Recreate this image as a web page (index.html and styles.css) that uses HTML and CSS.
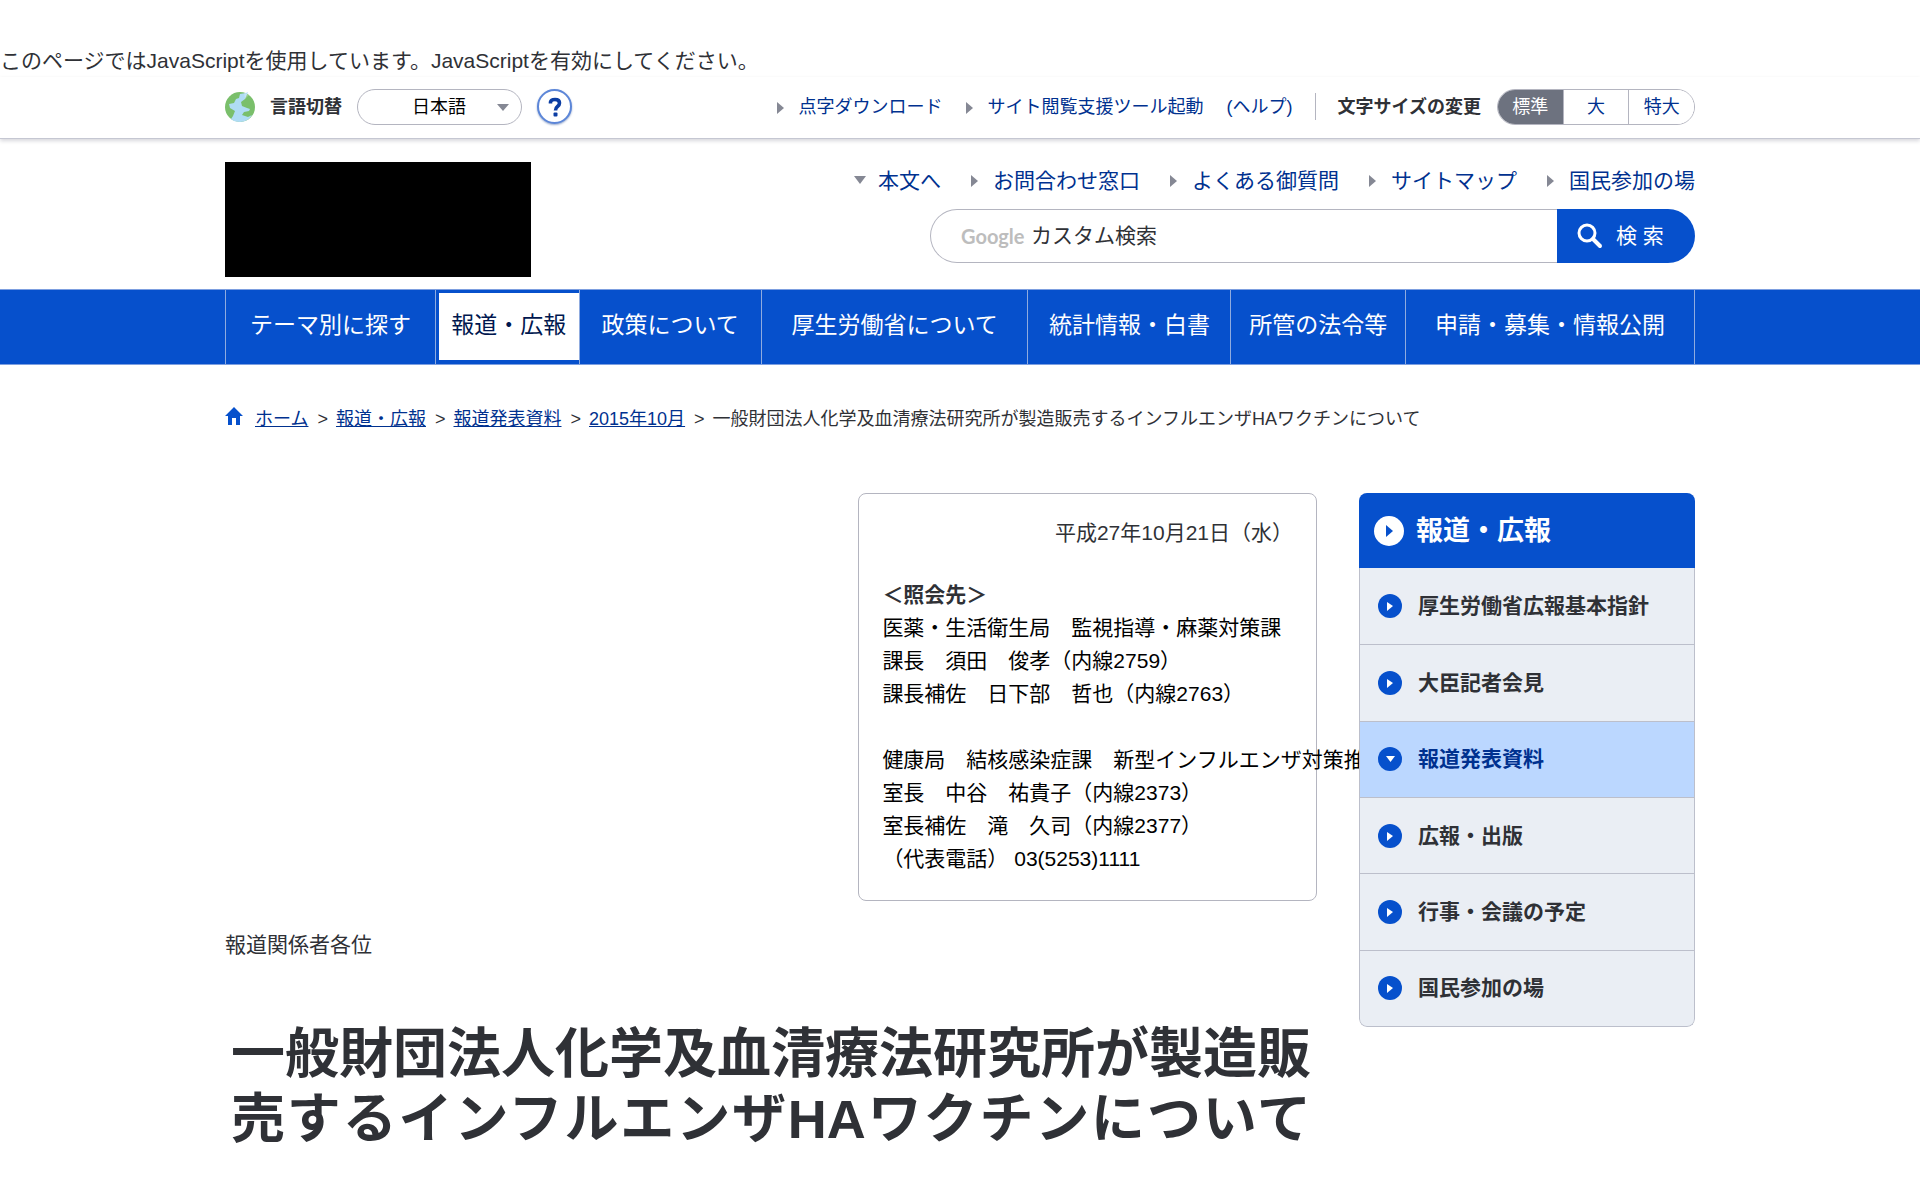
FILE: index.html
```html
<!DOCTYPE html>
<html lang="ja">
<head>
<meta charset="utf-8">
<meta name="viewport" content="width=device-width, initial-scale=1">
<title>一般財団法人化学及血清療法研究所が製造販売するインフルエンザHAワクチンについて</title>
<link rel="stylesheet" href="styles.css">
</head>
<body>
<p class="script-notice">このページではJavaScriptを使用しています。JavaScriptを有効にしてください。</p>

<div class="topbar">
  <div class="container topbar-inner">
    <div class="language">
      <svg class="globe" viewBox="0 0 30 30" aria-hidden="true">
        <circle cx="15" cy="15" r="15" fill="#7abf6b"/>
        <path d="M11 7 14 6 15 2 21 1 23 0 20 7 16 10 17 14 22 16 25 17 24 19 19 20 17 23 23 25 27 23 Q23 30 15 30 Q9 30 6 27 L8 24 10 19 5 16 4 12 9 11Z" fill="#afdcf5"/>
        <path d="M19 0 22 2 24 3 20 7Z" fill="#fff" opacity=".25"/>
      </svg>
      <label class="language-label" for="language">言語切替</label>
      <span class="select-wrap"><select id="language" class="language-select"><option>日本語</option><option>English</option></select></span>
      <button class="help" type="button" aria-label="言語切替のヘルプ">
        <svg viewBox="0 0 18 20" width="18" height="20" aria-hidden="true"><path d="M4.500 6.500V5Q5 2.500 9 2.500Q13.500 2.500 13.500 6Q13.500 8 11.500 9.500Q9.500 11 9.500 13.500" fill="none" stroke="#0b3da3" stroke-width="3.600"/><rect x="7.500" y="15.500" width="4" height="4" rx="1" fill="#0b3da3"/></svg>
      </button>
    </div>
    <div class="tools">
      <a class="arrow" href="#">点字ダウンロード</a>
      <a class="arrow" href="#">サイト閲覧支援ツール起動</a>
      <a class="tool-help" href="#">(ヘルプ)</a>
      <div class="text-size">
        <span class="text-size-label">文字サイズの変更</span>
        <div class="size-buttons">
          <button class="size is-current" type="button">標準</button>
          <button class="size" type="button">大</button>
          <button class="size" type="button">特大</button>
        </div>
      </div>
    </div>
  </div>
</div>

<header class="container header">
  <div class="logo"></div>
  <div class="header-side">
    <nav class="header-links">
      <a class="arrow arrow-down" href="#content">本文へ</a>
      <a class="arrow" href="#">お問合わせ窓口</a>
      <a class="arrow" href="#">よくある御質問</a>
      <a class="arrow" href="#">サイトマップ</a>
      <a class="arrow" href="#">国民参加の場</a>
    </nav>
    <form class="search">
      <label class="search-field"><span class="google">Google</span><input class="search-input" type="text" placeholder="カスタム検索"></label>
      <button class="search-button" type="button">
        <svg viewBox="0 0 26 26" width="26" height="26" aria-hidden="true"><circle cx="10" cy="10" r="8" fill="none" stroke="#fff" stroke-width="3"/><path d="M16 16 23 23" stroke="#fff" stroke-width="4" stroke-linecap="round"/></svg>
        検 索
      </button>
    </form>
  </div>
</header>

<nav class="global-nav">
  <ul class="container global-list">
    <li><a href="#">テーマ別に探す</a></li>
    <li class="is-active"><a href="#">報道・広報</a></li>
    <li><a href="#">政策について</a></li>
    <li><a href="#">厚生労働省について</a></li>
    <li><a href="#">統計情報・白書</a></li>
    <li><a href="#">所管の法令等</a></li>
    <li><a href="#">申請・募集・情報公開</a></li>
  </ul>
</nav>

<div class="container breadcrumb">
  <svg class="home" viewBox="0 0 18 18" aria-hidden="true"><path d="M9 0 18 9H15V18H11V11H7V18H3V9H0Z" fill="#0650cc"/></svg>
  <a href="#">ホーム</a><span>&gt;</span>
  <a href="#">報道・広報</a><span>&gt;</span>
  <a href="#">報道発表資料</a><span>&gt;</span>
  <a href="#">2015年10月</a><span>&gt;</span>
  <span>一般財団法人化学及血清療法研究所が製造販売するインフルエンザHAワクチンについて</span>
</div>

<div class="container columns">
  <main class="content" id="content">
    <section class="contact">
      <p class="contact-date">平成27年10月21日（水）</p>
      <h2 class="contact-title">＜照会先＞</h2>
      <p class="contact-group">医薬・生活衛生局　監視指導・麻薬対策課<br>課長　須田　俊孝（内線2759）<br>課長補佐　日下部　哲也（内線2763）</p>
      <p class="contact-group">健康局　結核感染症課　新型インフルエンザ対策推進室<br>室長　中谷　祐貴子（内線2373）<br>室長補佐　滝　久司（内線2377）<br>（代表電話） 03(5253)1111</p>
    </section>
    <p class="addressee">報道関係者各位</p>
    <h1 class="title">一般財団法人化学及血清療法研究所が製造販売するインフルエンザHAワクチンについて</h1>
  </main>
  <aside class="side">
    <h2 class="side-title"><a href="#"><svg viewBox="0 0 30 30" width="30" height="30" aria-hidden="true"><circle cx="15" cy="15" r="15" fill="#fff"/><path d="M12 9 19 15 12 21Z" fill="#0650cc"/></svg>報道・広報</a></h2>
    <ul class="side-list">
      <li><a href="#"><svg viewBox="0 0 24 24" width="24" height="24" aria-hidden="true"><circle cx="12" cy="12" r="12" fill="#0650cc"/><path d="M9 8 15 12 9 17Z" fill="#fff"/></svg>厚生労働省広報基本指針</a></li>
      <li><a href="#"><svg viewBox="0 0 24 24" width="24" height="24" aria-hidden="true"><circle cx="12" cy="12" r="12" fill="#0650cc"/><path d="M9 8 15 12 9 17Z" fill="#fff"/></svg>大臣記者会見</a></li>
      <li class="is-active"><a href="#"><svg viewBox="0 0 24 24" width="24" height="24" aria-hidden="true"><circle cx="12" cy="12" r="12" fill="#0650cc"/><path d="M8 9H17L12.500 15Z" fill="#fff"/></svg>報道発表資料</a></li>
      <li><a href="#"><svg viewBox="0 0 24 24" width="24" height="24" aria-hidden="true"><circle cx="12" cy="12" r="12" fill="#0650cc"/><path d="M9 8 15 12 9 17Z" fill="#fff"/></svg>広報・出版</a></li>
      <li><a href="#"><svg viewBox="0 0 24 24" width="24" height="24" aria-hidden="true"><circle cx="12" cy="12" r="12" fill="#0650cc"/><path d="M9 8 15 12 9 17Z" fill="#fff"/></svg>行事・会議の予定</a></li>
      <li><a href="#"><svg viewBox="0 0 24 24" width="24" height="24" aria-hidden="true"><circle cx="12" cy="12" r="12" fill="#0650cc"/><path d="M9 8 15 12 9 17Z" fill="#fff"/></svg>国民参加の場</a></li>
    </ul>
  </aside>
</div>
</body>
</html>
```

FILE: styles.css
```css
* { box-sizing: border-box; }

body {
  margin: 0;
  background: #fff;
  color: #2f3136;
  font-family: "Liberation Sans", "Noto Sans CJK JP", sans-serif;
  font-size: 21px;
  line-height: 32px;
}

h1, h2, p, ul { margin: 0; padding: 0; }
ul { list-style: none; }
a { color: #00318f; text-decoration: none; }
button, input, select { font: inherit; color: inherit; }
svg { flex: none; }

.container {
  width: 100%;
  max-width: 1470px;
  margin: 0 auto;
}

.script-notice { padding-top: 45px; }

/* top bar */
.topbar {
  border-bottom: 1px solid #c5c7d2;
  box-shadow: 0 2px 4px rgba(0, 0, 40, .16);
  font-size: 18px;
}
.topbar-inner {
  display: flex;
  justify-content: space-between;
  align-items: center;
  height: 61px;
  padding-bottom: 2px;
}
.language, .tools, .text-size, .size-buttons { display: flex; align-items: center; }
.globe { width: 30px; height: 30px; }
.language-label { margin: 0 15px; font-weight: bold; }
.select-wrap { position: relative; display: flex; }
.select-wrap::after {
  content: "";
  position: absolute;
  right: 13px;
  top: 15px;
  border: 6px solid transparent;
  border-top: 7px solid #858894;
  border-bottom: 0;
  pointer-events: none;
}
.language-select {
  width: 165px;
  height: 36px;
  padding: 0 0 0 54px;
  appearance: none;
  border: 1px solid #b4b5c0;
  border-radius: 18px;
  background: #fff;
  color: #000;
}
.help {
  display: flex;
  align-items: center;
  justify-content: center;
  width: 35px;
  height: 35px;
  margin-left: 15px;
  padding: 0;
  border: 2px solid #5c86d8;
  border-radius: 50%;
  background: #fff;
  box-shadow: 0 1px 2px #9aaccf;
}
.arrow::before {
  content: "";
  display: inline-block;
  margin-right: 15px;
  border: 6px solid transparent;
  border-left: 7px solid #858894;
  border-right: 0;
  vertical-align: -1px;
}
.tools .arrow { margin-right: 23px; }
.text-size {
  margin-left: 22px;
}
.text-size::before {
  content: "";
  width: 1px;
  height: 27px;
  margin-right: 22px;
  background: #b4b5c0;
}
.text-size-label { margin-right: 16px; font-weight: bold; }
.size-buttons {
  width: 198px;
  height: 36px;
  border: 1px solid #b4b5c0;
  border-radius: 18px;
  overflow: hidden;
}
.size {
  flex: 1;
  height: 34px;
  padding: 0;
  border: 0;
  border-left: 1px solid #b4b5c0;
  background: #fff;
  color: #00318f;
}
.size.is-current { border-left: 0; background: #6d727f; color: #fff; }

/* header */
.header {
  display: flex;
  justify-content: space-between;
  padding: 23px 0 12px;
}
.logo { width: 306px; height: 115px; background: #000; }
.header-side { display: flex; flex-direction: column; align-items: flex-end; }
.header-links { display: flex; gap: 30px; padding-top: 3px; }
.header-links .arrow::before {
  vertical-align: 1px;
}
.header-links .arrow-down::before {
  margin-right: 12px;
  border: 6px solid transparent;
  border-top: 8px solid #858894;
  border-bottom: 0;
  vertical-align: 4px;
}
.search { display: flex; width: 765px; height: 54px; margin-top: 12px; }
.search-field {
  display: flex;
  flex: 1;
  align-items: center;
  gap: 7px;
  padding-left: 30px;
  border: 1px solid #b4b5c0;
  border-right: 0;
  border-radius: 27px 0 0 27px;
}
.google {
  width: 63px;
  color: #bdbdbd;
  font-family: Lato, sans-serif;
  font-size: 20px;
  font-weight: bold;
}
.search-input {
  flex: 1;
  min-width: 0;
  padding: 0;
  border: 0;
  outline: 0;
  background: transparent;
}
.search-input::placeholder { color: #2f3136; opacity: 1; }
.search-button {
  display: flex;
  align-items: center;
  gap: 13px;
  width: 138px;
  padding: 0 0 0 20px;
  border: 0;
  border-radius: 0 27px 27px 0;
  background: #0650cc;
  color: #fff;
}

/* global navigation */
.global-nav {
  border: 1px solid #7d9fe0;
  border-width: 1px 0;
  background: #0650cc;
  font-size: 23px;
}
.global-list {
  display: grid;
  grid-template-columns: 210fr 144fr 182fr 267fr 203fr 175fr 289fr;
  height: 74px;
  border-right: 1px solid #8fabdf;
}
.global-list li { border-left: 1px solid #8fabdf; }
.global-list a {
  display: flex;
  align-items: center;
  justify-content: center;
  height: 100%;
  padding-bottom: 4px;
  color: #fff;
  white-space: nowrap;
}
.global-list .is-active { padding: 3px 0 4px 3px; }
.global-list .is-active a { background: #fff; color: #00174f; }

/* breadcrumb */
.breadcrumb {
  display: flex;
  flex-wrap: wrap;
  gap: 0 9px;
  padding: 38px 0 58px;
  font-size: 18px;
}
.breadcrumb a { text-decoration: underline; }
.breadcrumb a + span { margin-right: -1px; }
.home { width: 18px; height: 18px; margin: 4px 3px 0 0; }

/* page columns */
.columns { display: flex; align-items: flex-start; gap: 42px; }
.content { flex: 1; min-width: 0; }
.contact {
  width: 42%;
  margin-left: auto;
  padding: 23px 23px 25px;
  border: 1px solid #b4b5c0;
  border-radius: 8px;
}
.contact-date { text-align: right; }
.contact-title { margin-top: 30px; font-size: 21px; line-height: 32px; }
.contact-group { color: #000; line-height: 33px; white-space: nowrap; }
.contact-group + .contact-group { margin-top: 33px; }
.addressee { margin-top: 28px; }
.title {
  margin-top: 61px;
  padding: 0 6px;
  font-size: 54px;
  line-height: 65px;
  text-align: justify;
  text-align-last: justify;
}

/* side menu, kept above long lines that run out of the contact box */
.side {
  position: relative;
  width: 336px;
  flex: none;
  border-radius: 8px;
  overflow: hidden;
}
.side a { display: flex; align-items: center; height: 100%; }
.side-title { height: 75px; background: #0650cc; font-size: 27px; }
.side-title a { gap: 12px; padding-left: 15px; color: #fff; }
.side-list {
  display: grid;
  grid-auto-rows: 1fr;
  min-height: 459px;
  border: 1px solid #bcbfcb;
  border-top: 0;
  border-radius: 0 0 8px 8px;
  background: #eaeef4;
  font-weight: bold;
}
.side-list li + li { border-top: 1px solid #bcbfcb; }
.side-list a { gap: 16px; padding-left: 18px; color: #2f3136; }
.side-list .is-active { background: #bbd7ff; }
.side-list .is-active a { color: #00318f; }
```
